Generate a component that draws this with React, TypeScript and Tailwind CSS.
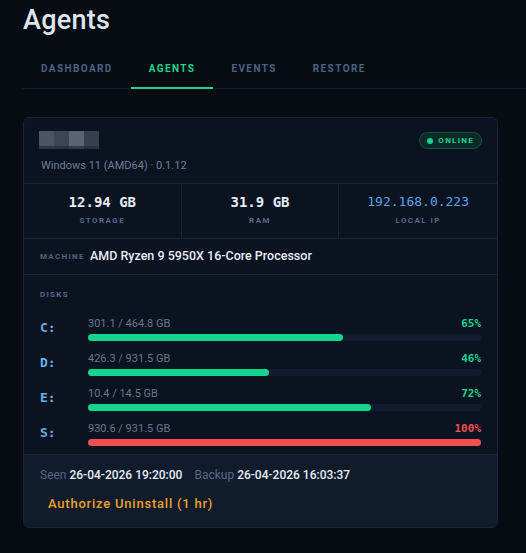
import React from 'react';

const sans = { fontFamily: 'Roboto, "Noto Sans", sans-serif' };

const tabs = ['DASHBOARD', 'AGENTS', 'EVENTS', 'RESTORE'];

const disks = [
  { letter: 'C:', used: '301.1 / 464.8 GB', pct: 65 },
  { letter: 'D:', used: '426.3 / 931.5 GB', pct: 46 },
  { letter: 'E:', used: '10.4 / 14.5 GB', pct: 72 },
  { letter: 'S:', used: '930.6 / 931.5 GB', pct: 100 },
];

const Stat = ({ value, label, ip }: { value: string; label: string; ip?: boolean }) => (
  <div className="flex flex-col items-center pt-[9px]">
    <div
      className={
        ip
          ? 'font-["DejaVu_Sans_Mono",monospace] text-[13px] leading-[18px] text-[#5aa4e8]'
          : 'font-["DejaVu_Sans_Mono",monospace] text-[14px] leading-[18px] font-bold text-[#e6edf5]'
      }
    >
      {value}
    </div>
    <div className="mt-[4px] text-[8px] font-bold tracking-[0.18em] text-[#55698a]">{label}</div>
  </div>
);

const DiskRow = ({ letter, used, pct }: { letter: string; used: string; pct: number }) => {
  const full = pct >= 90;
  return (
    <div className="flex items-start">
      <div className='w-[48px] pt-[4px] font-["DejaVu_Sans_Mono",monospace] text-[13px] font-bold leading-[14px] text-[#6aaee8]'>
        {letter}
      </div>
      <div className="flex-1">
        <div className="flex items-end justify-between">
          <span className="text-[11px] leading-[13px] text-[#66788f]">{used}</span>
          <span
            className={
              full
                ? 'font-["DejaVu_Sans_Mono",monospace] text-[11px] font-bold leading-[13px] text-[#ef4f4f]'
                : 'font-["DejaVu_Sans_Mono",monospace] text-[11px] font-bold leading-[13px] text-[#14d390]'
            }
          >
            {pct}%
          </span>
        </div>
        <div className="mt-[4px] h-[7px] rounded-full bg-[#111d2e]">
          <div
            className={full ? 'h-full rounded-full bg-[#ef4f4f]' : 'h-full rounded-full bg-[#12d68f]'}
            style={{ width: `${pct}%` }}
          />
        </div>
      </div>
    </div>
  );
};

export default function App() {
  return (
    <div className="min-h-[553px] bg-[#070b12] pl-[23px]" style={sans}>
      <h1 className="pt-[5px] text-[27px] font-medium leading-[30px] tracking-[0.01em] text-[#dde6f0]">Agents</h1>

      <div className="mt-[13px] flex border-b border-[#172131]">
        {tabs.map((t) => (
          <div
            key={t}
            className={
              t === 'AGENTS'
                ? 'mb-[-1px] border-b-2 border-[#1ed38f] px-[18px] pb-[11px] pt-[13px] text-[10px] font-bold tracking-[0.14em] text-[#1ed38f]'
                : 'mb-[-1px] border-b-2 border-transparent px-[18px] pb-[11px] pt-[13px] text-[10px] font-bold tracking-[0.14em] text-[#4b6485]'
            }
          >
            {t}
          </div>
        ))}
      </div>

      <div className="mt-[28px] w-[475px] overflow-hidden rounded-[6px] border border-[#1a2433] bg-[#0b1320]">
        {/* header */}
        <div className="flex h-[65px] items-start justify-between px-[15px] pt-[13px]">
          <div>
            <div className="flex flex-col">
              <div className="flex">
                <div className="h-[15px] w-[15px] bg-[#4a5463]" />
                <div className="h-[15px] w-[15px] bg-[#3c4655]" />
                <div className="h-[15px] w-[15px] bg-[#5a6472]" />
                <div className="h-[15px] w-[15px] bg-[#363f4c]" />
              </div>
              <div className="flex">
                <div className="h-[3px] w-[15px] bg-[#2f3847]" />
                <div className="h-[3px] w-[15px] bg-[#2a3341]" />
                <div className="h-[3px] w-[15px] bg-[#333c4a]" />
                <div className="h-[3px] w-[15px] bg-[#283140]" />
              </div>
            </div>
            <div className="mt-[10px] pl-[2px] text-[11px] leading-[14px] text-[#6b7f99]">Windows 11 (AMD64) · 0.1.12</div>
          </div>
          <div className="mt-[1px] flex h-[17px] items-center gap-[5px] rounded-full border border-[#15553f] bg-[#0b2a29] pl-[7px] pr-[7px]">
            <span className="h-[6px] w-[6px] rounded-full bg-[#14d390]" />
            <span className="text-[8px] font-bold tracking-[0.16em] text-[#18d68f]">ONLINE</span>
          </div>
        </div>

        {/* stats */}
        <div className="grid h-[55px] grid-cols-3 border-t border-[#1a2433]">
          <div className="border-r border-[#1a2433]">
            <Stat value="12.94 GB" label="STORAGE" />
          </div>
          <div className="border-r border-[#1a2433]">
            <Stat value="31.9 GB" label="RAM" />
          </div>
          <Stat value="192.168.0.223" label="LOCAL IP" ip />
        </div>

        {/* machine */}
        <div className="flex h-[36px] items-center border-t border-[#1a2433] px-[16px]">
          <span className="w-[50px] text-[8px] font-bold tracking-[0.16em] text-[#4f6382]">MACHINE</span>
          <span className="text-[12.5px] font-medium text-[#e6edf5]">AMD Ryzen 9 5950X 16-Core Processor</span>
        </div>

        {/* disks */}
        <div className="border-t border-[#1a2433] px-[16px] pb-[8px] pt-[14px]">
          <div className="text-[8px] font-bold tracking-[0.16em] text-[#55698a]">DISKS</div>
          <div className="mt-[16px] flex flex-col gap-[11px]">
            {disks.map((d) => (
              <DiskRow key={d.letter} {...d} />
            ))}
          </div>
        </div>

        {/* footer */}
        <div className="h-[73px] border-t border-[#1a2433] bg-[#101b2c] px-[16px] pt-[12px]">
          <div className="flex items-center gap-[12px] text-[12px] leading-[16px]">
            <span>
              <span className="text-[#56698a]">Seen </span>
              <span className="font-medium text-[#e6edf5]">26-04-2026 19:20:00</span>
            </span>
            <span>
              <span className="text-[#56698a]">Backup </span>
              <span className="font-medium text-[#e6edf5]">26-04-2026 16:03:37</span>
            </span>
          </div>
          <div className="mt-[13px] pl-[8px] text-[13px] font-medium leading-[16px] tracking-[0.06em] text-[#eba12a]">
            Authorize Uninstall (1 hr)
          </div>
        </div>
      </div>
    </div>
  );
}
